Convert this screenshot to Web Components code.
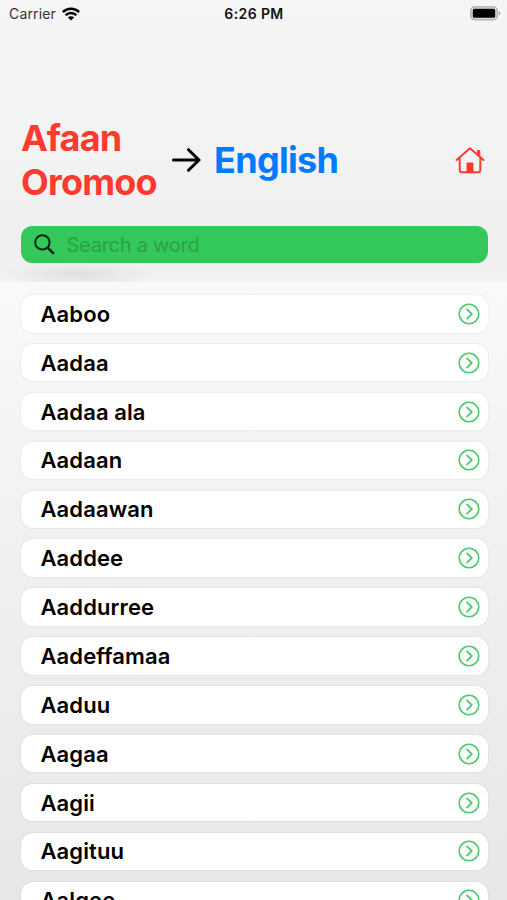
<!DOCTYPE html>
<html lang="om">
<head>
<meta charset="utf-8">
<title>Afaan Oromoo – English</title>
<style>
html,body{margin:0;height:100%;overflow:hidden}
body{font-family:Inter,"Liberation Sans",sans-serif;color:#000}
</style>
</head>
<body>
<dictionary-app></dictionary-app>
<script>
const define = (name, html) => customElements.define(name, class extends HTMLElement {
  constructor() {
    super();
    this.attachShadow({mode: 'open'}).innerHTML = html;
  }
});

define('status-bar', `
<style>
:host{display:grid;grid-template-columns:1fr auto 1fr;align-items:center;height:27px;padding:0 6px 0 9px;box-sizing:border-box;font-size:14px;color:#111}
.left{display:flex;align-items:center;gap:6px;color:#333;letter-spacing:.15px}
.time{font-weight:600;font-size:14px;letter-spacing:.4px;margin-right:2px}
.battery{justify-self:end}
svg{display:block}
</style>
<div class="left"><span>Carrier</span>
<svg width="18" height="14" viewBox="0 0 18 14" fill="none" stroke="#000" stroke-width="2.5"><path d="M.8 5.1a11.6 11.6 0 0 1 16.4 0M3.7 8.1a7.5 7.5 0 0 1 10.6 0"/><path d="M9 13.6 5.9 10.5a4.4 4.4 0 0 1 6.2 0z" fill="#000" stroke="none"/></svg></div>
<div class="time">6:26 PM</div>
<svg class="battery" width="31" height="15" viewBox="0 0 31 15"><rect x=".8" y=".8" width="26.4" height="13" rx="4" fill="#ddd" stroke="#aaa" stroke-width="1.3"/><rect x="2.8" y="2.8" width="22.4" height="9" rx="1.6" fill="#000"/><path d="M28.6 5v4.6q1.8-.7 1.8-2.3T28.6 5" fill="#aaa"/></svg>`);

define('language-header', `
<style>
:host{display:flex;align-items:center;height:88px;padding:0 22px 0 21px;font-size:36px;line-height:44px;font-weight:700}
.from{color:#ff3b30;width:137px;letter-spacing:-.8px}
.to{color:#007aff;letter-spacing:-.7px}
.arrow{margin:0 13px 0 13px}
.home{margin-left:auto}
svg{display:block;flex:none}
</style>
<div class="from"><slot name="from"></slot></div>
<svg class="arrow" width="30" height="26" viewBox="0 0 30 26" fill="none" stroke="#000" stroke-width="3" stroke-linecap="round" stroke-linejoin="round"><path d="M2.5 13H28M17.5 2.7 28 13 17.5 23.3"/></svg>
<div class="to"><slot name="to"></slot></div>
<svg class="home" width="30" height="28" viewBox="0 0 30 28" fill="none" stroke="#ff3b30" stroke-width="2" stroke-linecap="round" stroke-linejoin="round"><path d="M1.5 14 15 2.2 28.5 14M4.7 12v12q0 2.2 2.2 2.2h16.2q2.2 0 2.2-2.2V12"/><path d="M22.5 8V4.5h2.3V10M12 26V17h6v9z" fill="#ff3b30" stroke-width="1"/></svg>`);

define('search-field', `
<style>
:host{display:flex;align-items:center;height:37px;margin:0 19.5px 0 20.5px;padding-left:13.5px;border-radius:11.5px;background:#34c759;font-size:20px;gap:11.5px;color:#2aa24a}
span{letter-spacing:-.25px}
svg{display:block}
</style>
<svg width="21" height="21" viewBox="0 0 21 21" fill="none" stroke="#06270f" stroke-width="2" stroke-linecap="round"><circle cx="8.4" cy="8.4" r="7.2"/><path d="m13.8 13.8 5.4 5.4" stroke-width="2.5"/></svg>
<span><slot></slot></span>`);

define('word-row', `
<style>
:host{display:flex;flex:none;align-items:center;justify-content:space-between;box-sizing:border-box;height:37.5px;padding:0 7.5px 0 20px;border-radius:12px;background:#fff;box-shadow:0 0 2px rgba(0,0,0,.12);font-size:22px;font-weight:570}
span{letter-spacing:.1px}
svg{display:block}
</style>
<span><slot></slot></span>
<svg width="22" height="22" viewBox="0 0 22 22" fill="none" stroke="#4cca6c" stroke-width="1.6" stroke-linecap="round" stroke-linejoin="round"><circle cx="11" cy="11" r="9.8"/><path d="m9 6.4 4.8 4.6L9 15.6" stroke-width="1.8"/></svg>`);

define('dictionary-app', `
<style>
:host{display:flex;flex-direction:column;height:900px;overflow:hidden;background:linear-gradient(#faf9f7 282px,#f1f0ee 560px,#e8e7e5 900px)}
header{flex:none;height:282px;background:radial-gradient(ellipse 75px 13px at 78px 274px,#dededf 0,#e4e4e5aa 45%,transparent 100%),linear-gradient(#f5f5f5,#f3f3f3 140px,#efefef 240px,#f1f1f1)}
language-header{margin-top:89px;margin-bottom:22px}
main{display:flex;flex-direction:column;gap:11.38px;padding:13.1px 19.5px 0 20.5px}
</style>
<header>
<status-bar></status-bar>
<language-header><span slot="from">Afaan Oromoo</span><span slot="to">English</span></language-header>
<search-field>Search a word</search-field>
</header>
<main>${['Aaboo','Aadaa','Aadaa ala','Aadaan','Aadaawan','Aaddee','Aaddurree','Aadeffamaa','Aaduu','Aagaa','Aagii','Aagituu','Aalgee'].map(w => `<word-row>${w}</word-row>`).join('')}</main>`);
</script>
</body>
</html>
